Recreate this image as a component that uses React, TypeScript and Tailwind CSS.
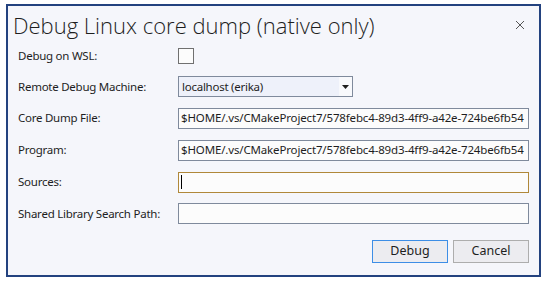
import React from "react";

const font = { fontFamily: "'Noto Sans', 'Open Sans', sans-serif" };

function Field({ value, focused }: { value?: string; focused?: boolean }) {
  return (
    <div
      className={`flex h-[21px] w-full min-w-0 items-center overflow-hidden whitespace-nowrap border bg-[#fcfcfc] pl-[2px] text-[11.5px] tracking-[-0.15px] text-[#1e1e1e] ${
        focused ? "border-[#b0883a]" : "border-[#7f8a9c]"
      }`}
    >
      {focused && <span className="h-[14px] w-px bg-black" />}
      {value}
    </div>
  );
}

export default function App() {
  const path = "$HOME/.vs/CMakeProject7/578febc4-89d3-4ff9-a42e-724be6fb54";
  return (
    <div className="h-[282px] w-[548px] bg-white pl-[6px] pt-[4px]" style={font}>
      <div className="flex h-[273px] w-[535px] flex-col border-2 border-[#23427f] bg-[#f5f6fb]">
        {/* title */}
        <div className="flex h-[34px] items-center justify-between pl-[5px] pr-[14px] pt-[3px]">
          <span className="font-['Open_Sans','Noto_Sans',sans-serif] text-[22px] font-light leading-none text-[#1e1e1e]">
            Debug Linux core dump (native only)
          </span>
          <svg width="10" height="10" viewBox="0 0 10 10" className="mt-[1px]">
            <path d="M1 1L9 9M9 1L1 9" stroke="#555" strokeWidth="1" />
          </svg>
        </div>

        {/* form */}
        <div className="grid grid-cols-[160px_minmax(0,1fr)] pl-[10px] pr-[10px] text-[11.5px] tracking-[-0.25px] text-[#1e1e1e]">
          <div className="flex h-[31px] items-center">Debug on WSL:</div>
          <div className="flex h-[31px] items-center">
            <div className="h-[16px] w-[16px] border border-[#707070] bg-[#fcfcfc]" />
          </div>

          <div className="flex h-[31px] items-center">Remote Debug Machine:</div>
          <div className="flex h-[31px] items-center">
            <div className="flex h-[21px] w-[175px] items-stretch border border-[#7f8a9c] bg-[#eef1fa]">
              <div className="flex flex-1 items-center pl-[3px]">localhost (erika)</div>
              <div className="flex w-[13px] items-center justify-center bg-[#f8f9fc]">
                <svg width="7" height="4" viewBox="0 0 7 4">
                  <path d="M0 0H7L3.5 4Z" fill="#1e1e1e" />
                </svg>
              </div>
            </div>
          </div>

          <div className="flex h-[32px] items-center">Core Dump File:</div>
          <div className="flex h-[32px] items-center">
            <Field value={path} />
          </div>

          <div className="flex h-[32px] items-center">Program:</div>
          <div className="flex h-[32px] items-center">
            <Field value={path} />
          </div>

          <div className="flex h-[32px] items-center">Sources:</div>
          <div className="flex h-[32px] items-center">
            <Field focused />
          </div>

          <div className="flex h-[31px] items-center">Shared Library Search Path:</div>
          <div className="flex h-[31px] items-center">
            <Field />
          </div>
        </div>

        {/* buttons */}
        <div className="mt-[11px] flex justify-end gap-[5px] pr-[10px] text-[12.5px] text-[#1e1e1e]">
          <button className="h-[23px] w-[76px] border border-[#3d8ee6] bg-[#ececf0]">Debug</button>
          <button className="h-[23px] w-[76px] border border-[#adadad] bg-[#ececf0]">Cancel</button>
        </div>
      </div>
    </div>
  );
}
